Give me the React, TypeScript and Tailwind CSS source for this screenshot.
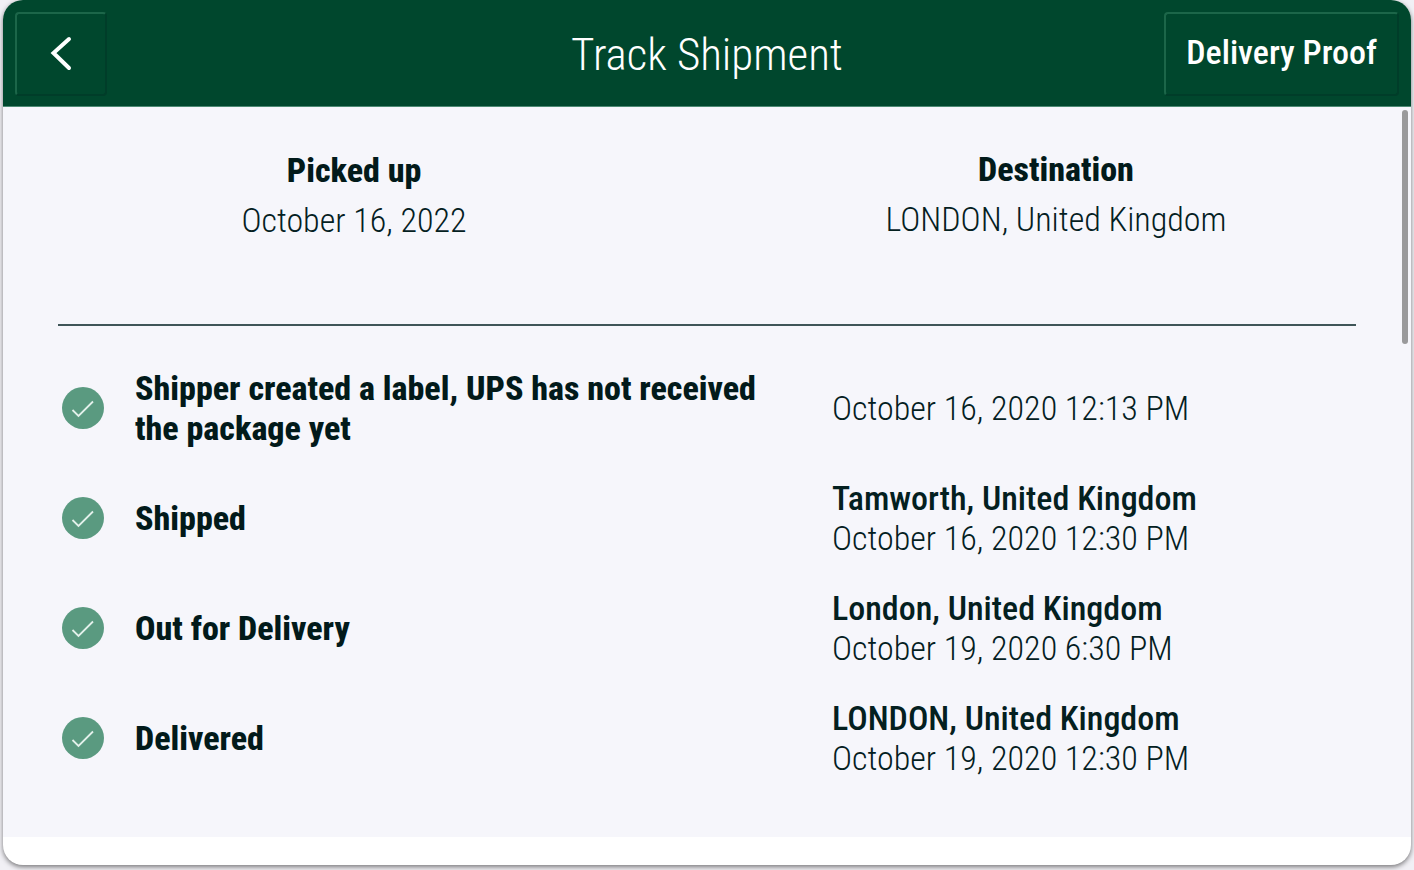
type TrackEvent = {
    status: string
    place?: string
    time: string
}

const events: TrackEvent[] = [
    { status: 'Shipper created a label, UPS has not received the package yet', time: 'October 16, 2020 12:13 PM' },
    { status: 'Shipped', place: 'Tamworth, United Kingdom', time: 'October 16, 2020 12:30 PM' },
    { status: 'Out for Delivery', place: 'London, United Kingdom', time: 'October 19, 2020 6:30 PM' },
    { status: 'Delivered', place: 'LONDON, United Kingdom', time: 'October 19, 2020 12:30 PM' },
]

const bevel = 'border-2 border-t-[#1c6649] border-l-[#1c6649] border-r-[#003d29] border-b-[#003d29] rounded-sm'

function CheckBadge() {
    return (
        <svg viewBox="0 0 42 42" className="size-[42px] shrink-0" aria-hidden="true">
            <circle cx="21" cy="21" r="21" fill="#5a9a80" />
            <path d="M10.5 23 L16.500 29 L31 14.500" fill="none" stroke="#e3f0ea" strokeWidth="1.800" />
        </svg>
    )
}

export default function App() {
    return (
        <div className="min-h-screen bg-[#f1f0f5] px-[3px] pb-[5px] flex flex-col font-['Roboto_Condensed','Liberation_Sans_Narrow',Roboto,sans-serif] text-[#04201f]">
            <div className="grow flex flex-col bg-white rounded-[20px] overflow-hidden shadow-[0_2px_5px_rgba(0,0,0,0.5)]">
                {/* Header */}
                <header className="h-[107px] bg-[#00472d] border-b border-[#4d8a74] px-3 pt-3 pb-[10px] grid grid-cols-[1fr_auto_1fr] text-white">
                    <button aria-label="Back" className={`${bevel} w-[92px] h-[84px] flex items-center justify-center`}>
                        <svg viewBox="0 0 24 36" className="w-6 h-9" aria-hidden="true">
                            <path d="M20 3 L4.500 17 L20 32" fill="none" stroke="white" strokeWidth="4" strokeLinecap="round" />
                        </svg>
                    </button>
                    <h1 className="text-[45px] leading-[86px] font-[350]">Track Shipment</h1>
                    <button className={`${bevel} justify-self-end h-[84px] px-5 pb-1 text-[34px] font-medium`}>
                        Delivery Proof
                    </button>
                </header>

                <main className="relative bg-[#f6f6fb] grow mb-7">
                    {/* Summary */}
                    <dl className="grid grid-cols-2 pt-[37px] pr-1 text-center text-[34px] leading-[50px]">
                        <div className="pt-px">
                            <dt className="font-extrabold text-[#021a1a]">Picked up</dt>
                            <dd className="font-[350]">October 16, 2022</dd>
                        </div>
                        <div>
                            <dt className="font-extrabold text-[#021a1a]">Destination</dt>
                            <dd className="font-[350]">LONDON, United Kingdom</dd>
                        </div>
                    </dl>
                    <hr className="mt-[79px] ml-[55px] mr-[55px] border-t-2 border-[#3f5558]" />

                    {/* Timeline */}
                    <ul className="mt-[42px] ml-[59px] mr-[55px] flex flex-col gap-[30px] text-[34px] leading-10">
                        {events.map((e) => (
                            <li key={e.status} className="flex items-center min-h-20">
                                <CheckBadge />
                                <p className="ml-[31px] mr-[47px] flex-1 font-extrabold text-[#021a1a]">{e.status}</p>
                                <div className="w-[524px]">
                                    {e.place && <p className="font-medium">{e.place}</p>}
                                    <p className="font-[350]">{e.time}</p>
                                </div>
                            </li>
                        ))}
                    </ul>

                    {/* Scroll thumb */}
                    <div className="absolute top-[3px] right-[3px] w-[6px] h-[234px] rounded-full bg-[#9a9a9b]" />
                </main>
            </div>
        </div>
    )
}
